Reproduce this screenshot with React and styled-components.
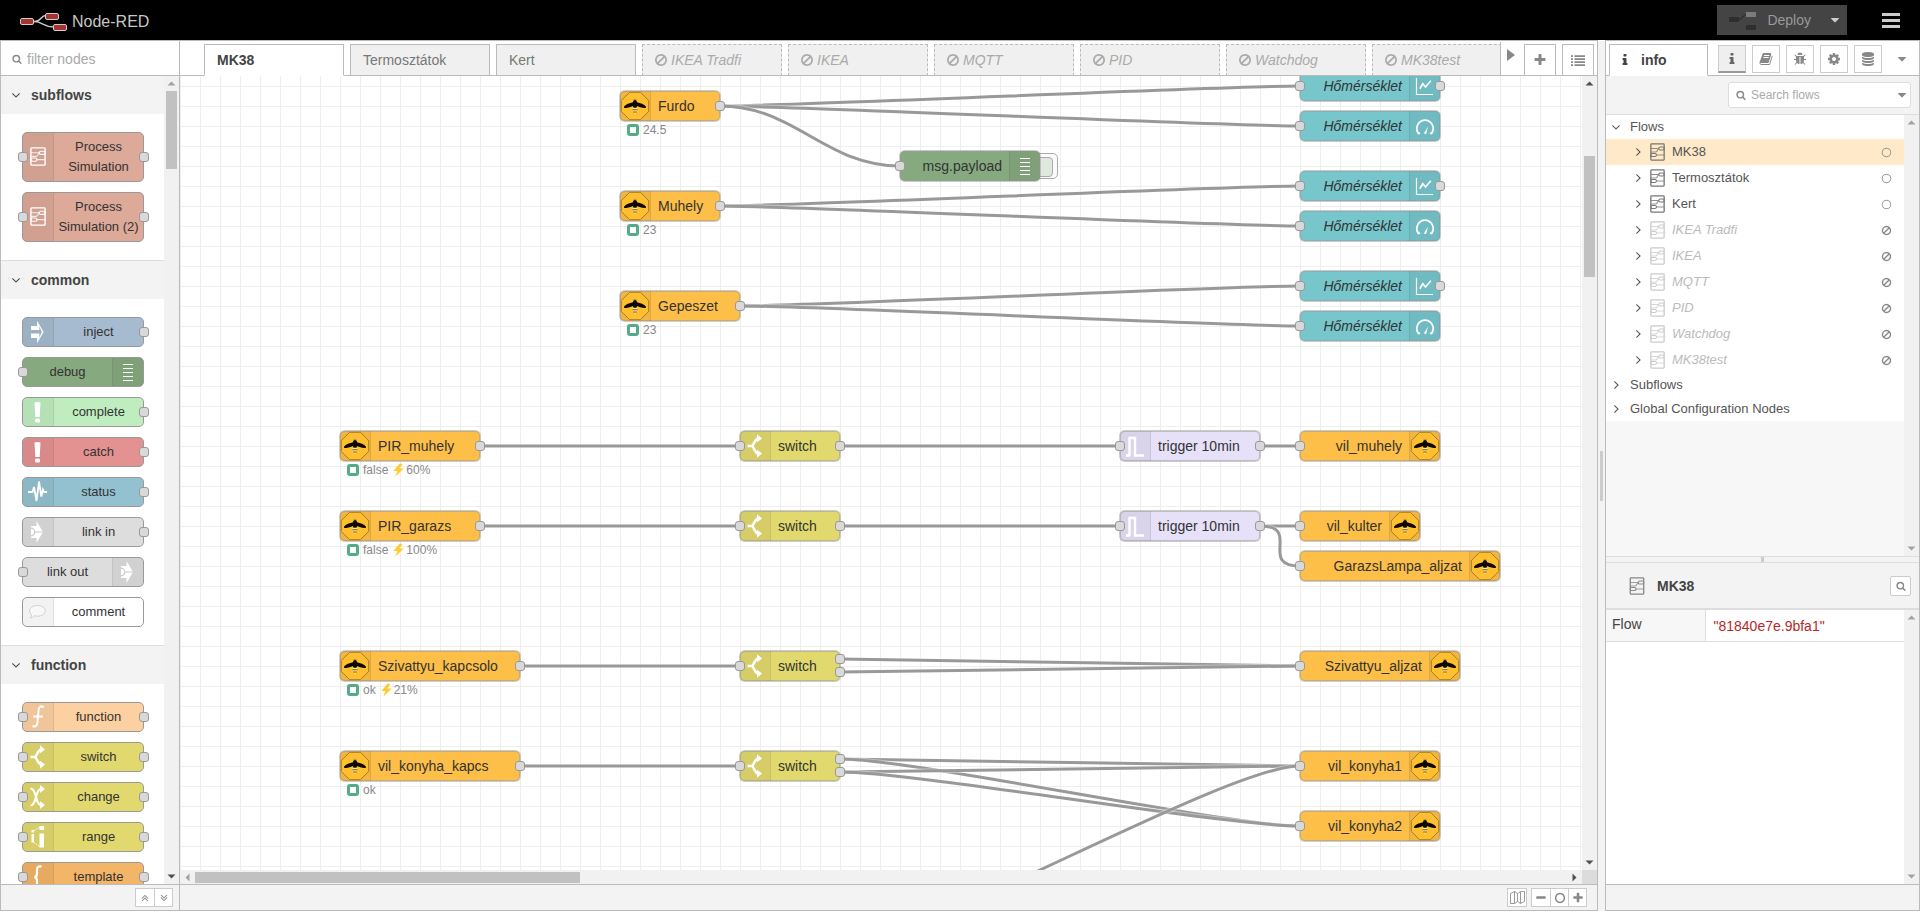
import styled, { createGlobalStyle, css } from 'styled-components';


const GlobalStyle = createGlobalStyle`
    * {
        box-sizing: border-box;
    }
    body {
        margin: 0;
        font-family: "Liberation Sans", Arial, sans-serif;
        font-size: 14px;
        line-height: 20px;
        color: #444;
        background-color: #fff;
    }
    button, input {
        font-family: inherit;
        font-size: inherit;
        color: inherit;
        padding: 0;
        margin: 0;
        border: none;
        background: none;
    }
    a {
        color: inherit;
        text-decoration: none;
    }
    svg {
        display: block;
        flex: none;
    }
`;

const glyphs = {
    search: "M1216 832q0-185-131.5-316.5t-316.5-131.5-316.5 131.5-131.5 316.5 131.5 316.5 316.5 131.5 316.5-131.5 131.5-316.5zm512 832q0 52-38 90t-90 38q-54 0-90-38l-343-342q-179 124-399 124-143 0-273.5-55.5t-225-150-150-225-55.5-273.5 55.5-273.5 150-225 225-150 273.5-55.5 273.5 55.5 225 150 150 225 55.5 273.5q0 220-124 399l343 343q37 37 37 90z",
    plus: "M1600 736v192q0 40-28 68t-68 28h-416v416q0 40-28 68t-68 28h-192q-40 0-68-28t-28-68v-416h-416q-40 0-68-28t-28-68v-192q0-40 28-68t68-28h416v-416q0-40 28-68t68-28h192q40 0 68 28t28 68v416h416q40 0 68 28t28 68z",
    minus: "M1600 736v192q0 40-28 68t-68 28h-1216q-40 0-68-28t-28-68v-192q0-40 28-68t68-28h1216q40 0 68 28t28 68z",
    info: "M1216 1344v128q0 26-19 45t-45 19h-512q-26 0-45-19t-19-45v-128q0-26 19-45t45-19h64v-384h-64q-26 0-45-19t-19-45v-128q0-26 19-45t45-19h384q26 0 45 19t19 45v576h64q26 0 45 19t19 45zm-128-1152v192q0 26-19 45t-45 19h-256q-26 0-45-19t-19-45v-192q0-26 19-45t45-19h256q26 0 45 19t19 45z",
    cog: "M1152 896q0-106-75-181t-181-75-181 75-75 181 75 181 181 75 181-75 75-181zm512-109v222q0 12-8 23t-20 13l-185 28q-19 54-39 91 35 50 107 138 10 12 10 25t-9 23q-27 37-99 108t-94 71q-12 0-26-9l-138-108q-44 23-91 38-16 136-29 186-7 28-36 28h-222q-14 0-24.5-8.5t-11.5-21.5l-28-184q-49-16-90-37l-141 107q-10 9-25 9-14 0-25-11-126-114-165-168-7-10-7-23 0-12 8-23 15-21 51-66.5t54-70.5q-27-50-41-99l-183-27q-13-2-21-12.5t-8-23.5v-222q0-12 8-23t19-13l186-28q14-46 39-92-40-57-107-138-10-12-10-24 0-10 9-23 26-36 98.5-107.5t94.5-71.5q13 0 26 10l138 107q44-23 91-38 16-136 29-186 7-28 36-28h222q14 0 24.5 8.5t11.5 21.5l28 184q49 16 90 37l142-107q9-9 24-9 13 0 25 10 129 119 165 170 7 8 7 22 0 12-8 23-15 21-51 66.5t-54 70.5q26 50 41 98l183 28q13 2 21 12.5t8 23.5z",
    database: "M896 768q237 0 443-43t325-127v170q0 69-103 128t-280 93.5-385 34.5-385-34.5-280-93.5-103-128v-170q119 84 325 127t443 43zm0 768q237 0 443-43t325-127v170q0 69-103 128t-280 93.5-385 34.5-385-34.5-280-93.5-103-128v-170q119 84 325 127t443 43zm0-384q237 0 443-43t325-127v170q0 69-103 128t-280 93.5-385 34.5-385-34.5-280-93.5-103-128v-170q119 84 325 127t443 43zm0-1152q208 0 385 34.5t280 93.5 103 128v128q0 69-103 128t-280 93.5-385 34.5-385-34.5-280-93.5-103-128v-128q0-69 103-128t280-93.5 385-34.5z",
    bug: "M1696 960q0 26-19 45t-45 19h-224q0 171-67 290l208 209q19 19 19 45t-19 45q-18 19-45 19t-45-19l-198-197q-5 5-15 13t-42 28.5-65 36.5-82 29-97 13v-896h-128v896q-51 0-101.5-13.5t-87-33-66-39-43.5-32.5l-15-14-183 207q-20 21-48 21-24 0-43-16-19-18-20.5-44.5t15.5-46.5l202-227q-58-114-58-274h-224q-26 0-45-19t-19-45 19-45 45-19h224v-294l-173-173q-19-19-19-45t19-45 45-19 45 19l173 173h844l173-173q19-19 45-19t45 19 19 45-19 45l-173 173v294h224q26 0 45 19t19 45zm-480-576h-640q0-133 93.5-226.5t226.5-93.5 226.5 93.5 93.5 226.5z",
    book: "M1703 478q40 57 18 129l-275 906q-19 64-76.5 107.5t-122.5 43.5h-923q-77 0-148.5-53.5t-99.5-131.5q-24-67-2-127 0-4 3-27t4-37q1-8-3-21.5t-3-19.5q2-11 8-21t16.5-23.5 16.5-23.5q23-38 45-91.5t30-91.5q3-10 .5-30t-.5-28q3-11 17-28t17-23q21-36 42-92t25-90q1-9-2.5-32t.5-28q4-13 22-30.5t22-22.5q19-26 42.5-84.5t27.5-96.5q1-8-3-25.5t-2-26.5q2-8 9-18t18-23 17-21q8-12 16.5-30.5t15-35 16-36 19.5-32 26.5-23.5 36-11.5 47.5 5.5l-1 3q38-9 51-9h761q74 0 114 56t18 130l-274 906q-36 119-71.5 153.5t-128.5 34.5h-869q-27 0-38 15-11 16-1 43 24 70 144 70h923q29 0 56-15.5t35-41.5l300-987q7-22 5-57 38 15 59 43zm-1064 2q-4 13 2 22.5t20 9.5h608q13 0 25.5-9.5t16.5-22.5l21-64q4-13-2-22.5t-20-9.5h-608q-13 0-25.5 9.5t-16.5 22.5zm-83 256q-4 13 2 22.5t20 9.5h608q13 0 25.5-9.5t16.5-22.5l21-64q4-13-2-22.5t-20-9.5h-608q-13 0-25.5 9.5t-16.5 22.5z",
    ban: "M1440 893q0-161-87-295l-754 753q137 89 297 89 111 0 211.5-43.5t173.5-116.5 116-174.5 43-212.5zm-999 299l755-754q-135-91-300-91-148 0-273 73t-198 199-73 274q0 162 89 299zm1223-299q0 157-61 300t-163.5 246-245 164-298.5 61-298.5-61-245-164-163.5-246-61-300 61-299.5 163.5-245.5 245-164 298.5-61 298.5 61 245 164 163.5 245.5 61 299.5z",
    caret: "M1408 704q0 26-19 45l-448 448q-19 19-45 19t-45-19l-448-448q-19-19-19-45t19-45 45-19h896q26 0 45 19t19 45z",
    angle: "M1395 736q0 13-10 23l-466 466q-10 10-23 10t-23-10l-466-466q-10-10-10-23t10-23l50-50q10-10 23-10t23 10l393 393 393-393q10-10 23-10t23 10l50 50q10 10 10 23z",
    angles: "M1395 864q0 13-10 23l-466 466q-10 10-23 10t-23-10l-466-466q-10-10-10-23t10-23l50-50q10-10 23-10t23 10l393 393 393-393q10-10 23-10t23 10l50 50q10 10 10 23zm0-384q0 13-10 23l-466 466q-10 10-23 10t-23-10l-466-466q-10-10-10-23t10-23l50-50q10-10 23-10t23 10l393 393 393-393q10-10 23-10t23 10l50 50q10 10 10 23z",
    list: "M0 288h256v224H0zM448 288h1344v224H448zM0 672h256v224H0zM448 672h1344v224H448zM0 1056h256v224H0zM448 1056h1344v224H448zM0 1440h256v224H0zM448 1440h1344v224H448z",
    circle: "M896 352q-148 0-273 73t-198 198-73 273 73 273 198 198 273 73 273-73 198-198 73-273-73-273-198-198-273-73zm768 544q0 209-103 385.5t-279.5 279.5-385.5 103-385.5-103-279.5-279.5-103-385.5 103-385.5 279.5-279.5 385.5-103 385.5 103 279.5 279.5 103 385.5z",
    thin: "M896 256q-130 0-248.5 51t-204 136.5-136.5 204-51 248.5 51 248.5 136.5 204 204 136.5 248.5 51 248.5-51 204-136.5 136.5-204 51-248.5-51-248.5-136.5-204-204-136.5-248.5-51zm768 640q0 209-103 385.5t-279.5 279.5-385.5 103-385.5-103-279.5-279.5-103-385.5 103-385.5 279.5-279.5 385.5-103 385.5 103 279.5 279.5 103 385.5z",
};

const Glyph = ({ name, size = 14, turn = 0, color = "currentColor" }) => (
    <svg width={size} height={size} viewBox="0 0 1792 1792" fill={color} aria-hidden="true">
        <path d={glyphs[name]} transform={`rotate(${turn} 896 896)`} />
    </svg>
);

const SubflowIcon = ({ width = 16, height = 19, color = "#fff", stroke = 1.4 }) => (
    <svg width={width} height={height} viewBox="0 0 16 19" fill="none" stroke={color}>
        <rect x="0.9" y="0.9" width="14.2" height="17.2" rx="0.8" strokeWidth={stroke} />
        <g strokeWidth={stroke - 0.3}>
            <path d="M1 5.8h8M1 9.400h5c2.500 0 1.500-3 3.500-3.600M7 12.600H15" strokeOpacity="0.8" />
            <rect x="9.4" y="4.2" width="5.7" height="3.2" rx="1.4" />
            <rect x="0.9" y="11" width="6" height="3.2" rx="1.4" />
        </g>
    </svg>
);

const MapIcon = () => (
    <svg width="15" height="13" viewBox="0 0 15 13" fill="none" stroke="#999" strokeWidth="1">
        <path d="M.5 2.5l4-2 3 2 3-2 4-.2v10.200l-4 2-3-2-3 2-4 0zM4.5.5v12M7.5 2.5v8M10.5.5v12" />
    </svg>
);

const Bolt = () => (
    <svg width="11" height="14" viewBox="0 0 11 14" fill="#fdcb2e">
        <path d="M6.800.5L.3 8h4.200L2.200 13.700 10.700 5.400H6.300L9.600.9z" />
    </svg>
);

const Logo = () => (
    <svg width="48" height="20" viewBox="0 0 48 20" fill="none" stroke="#ccc">
        <path d="M14 9.5c8 0 6-6 12-6M14 9.5c9 0 9 5.5 20 5.5" strokeWidth="1.5" />
        <g fill="#a63334" strokeWidth="1">
            <rect x="0.5" y="6.5" width="13" height="6" rx="1.5" />
            <rect x="25.5" y="1.5" width="13" height="6" rx="1.5" />
            <rect x="33.5" y="12.5" width="13" height="6" rx="1.5" />
        </g>
    </svg>
);

const DeployIcon = () => (
    <svg width="28" height="20" viewBox="0 0 28 20">
        <path d="M10 9.5c4 0 3-5 8-5" stroke="#2e2e2e" strokeWidth="1.2" fill="none" />
        <rect x="0" y="7" width="10" height="5" fill="#2e2e2e" />
        <rect x="17" y="2" width="10" height="5" fill="#7c7c7c" />
        <rect x="17" y="15" width="10" height="5" fill="#2e2e2e" />
    </svg>
);

// Drawings that stand in the shaded end of a node, on a 30 x 30 grid
const nodeArt = {
    bee: (
        <>
            <path d="M9.6 1.3h10.800l8.300 8.300v10.800l-8.300 8.300H9.600L1.300 20.400V9.600z" fill="#ffbf2f" stroke="#a97c26" strokeWidth="1" />
            <path d="M13.900 7.800l.8 1.800h.6l.8-1.800" stroke="#8a661a" strokeWidth="0.6" fill="none" />
            <path d="M15 9c1.200 0 1.900.9 2 2.300 3.300.7 7.300 2.200 8.900 4.100.6.9-.2 1.600-1.600 1.600-2.500 0-5.300-.9-7-1.900L16.300 17h-2.600l-1-1.900c-1.700 1-4.500 1.900-7 1.900-1.400 0-2.200-.7-1.600-1.600 1.600-1.900 5.600-3.400 8.900-4.100.1-1.400.8-2.300 2-2.300z" fill="#0c0903" />
            <path d="M12.600 16.800h4.800v1.400h-4.800zM12.700 19.300h4.600v1.200h-4.600zM13.900 21.600h2.200L15 23.200z" fill="#fff0b8" />
            <path d="M12.500 18.200h5v1.100h-5zM13.200 20.500h3.600v1.100h-3.600z" fill="#8a5d10" />
        </>
    ),
    inject: <path d="M8 9h6V3.800L20.600 15 14 26.200V21H8v-4.500h8.300v4L18.900 15l-2.600-5.500v3.500H8z" fill="#fff" />,
    debug: <path d="M10 7.500h10M10 11.500h10M10 15.500h10M10 19.500h10M10 23.500h10" stroke="#fff" strokeWidth="1.2" />,
    bang: (
        <>
            <path d="M11.500 5.500q3-1.200 6 0L16.700 20h-4.400z" fill="#fff" />
            <rect x="12" y="21.5" width="5" height="4" rx="1.5" fill="#fff" />
        </>
    ),
    status: <path d="M5 15h4.500l1.500-5 2.500 14L16 4.500l2.300 15 1.600-7L21 15h3" fill="none" stroke="#fff" strokeWidth="1.8" />,
    link: (
        <>
            <path d="M8 9h5.500V4L20 15l-6.500 11v-5H8z" fill="#fff" />
            <path d="M8 11.200a3.800 3.800 0 0 1 0 7.600M11.800 15H20" fill="none" stroke="#c9c9c9" strokeWidth="1.2" />
        </>
    ),
    comment: <path d="M14.500 8.500c4.500 0 7.800 2.300 7.800 5.300s-3.300 5.400-7.800 5.400c-1.100 0-2.200-.2-3.200-.4-1.100 1.300-2.600 2-4.300 2.200 1-.9 1.500-2 1.500-3.300-1.200-1-1.900-2.400-1.900-3.900 0-3 3.400-5.300 7.900-5.300z" fill="#f8f8f8" stroke="#ccc" strokeWidth="0.9" />,
    func: <path d="M20.800 5.500c-3-2.500-5-.5-5.300 3l-1 11.500c-.3 4-2 5.500-5 4M10 14.500h10" fill="none" stroke="#fff" strokeWidth="2" />,
    fork: (
        <>
            <path d="M7.500 15h4.500c2-1 2.500-7 6.500-7.800M12 15c2 1 2.500 7 6.500 7.800" fill="none" stroke="#fff" strokeWidth="2.4" />
            <path d="M17 3.200l5 4.300-5 3.800zM17 18.700l5 3.800-5 4.300z" fill="#fff" />
        </>
    ),
    change: (
        <>
            <path d="M7.500 6.500c3 0 4.200 3 5.500 8.500s2.500 8 5 8M7.500 23.500c3 0 4.200-3 5.500-8.500s2.500-8 5-8" fill="none" stroke="#fff" strokeWidth="2.2" />
            <path d="M17 3l5 4-5 4zM17 19l5 4-5 4z" fill="#fff" />
        </>
    ),
    range: (
        <>
            <path d="M8.500 8h2.500v2.500H8.500zM8.500 12h2.500v8.500H8.500zM16.500 4h4.500v4h-4.500zM16.500 11.500h4.500v14h-4.500z" fill="#fff" />
            <path d="M11 8.500l5.500-3M11 20.500l5.500 4" stroke="#fff" strokeWidth="1" strokeDasharray="1.5 1" />
        </>
    ),
    template: <path d="M18.500 4.500c-4-.5-4.500 1-4.500 4v3c0 2.500-.5 3.500-2.800 3.700 2.300.2 2.800 1.300 2.800 3.800v3c0 3 .5 4.500 4.500 4" fill="none" stroke="#fff" strokeWidth="2.2" />,
    trigger: <path d="M6 24.500h3.500V7h5.500v17.500h9" fill="none" stroke="#fff" strokeWidth="2.4" />,
    chart: (
        <>
            <path d="M6.500 7v16.500h16.500" fill="none" stroke="#fff" strokeWidth="1.2" />
            <path d="M9.800 17.800l3-5 2.700 3.200 5.300-6.300" fill="none" stroke="#fff" strokeWidth="1.7" />
        </>
    ),
    gauge: (
        <>
            <path d="M10 22.200l-1.600.3a8.300 8.300 0 1 1 13.200 0l-1.600-.3" fill="none" stroke="#fff" strokeWidth="1.8" />
            <path d="M13.800 22.500L18 15.500l-1.800 7.500z" fill="#fff" />
        </>
    ),
};


/* ---------- Shell ---------- */

const Page = styled.div`
    height: 100vh;
    padding-bottom: 3px;
    display: flex;
    flex-direction: column;
    overflow: hidden;
`;

const Header = styled.header`
    height: 40px;
    padding: 0 20px;
    background-color: #000;
    display: flex;
    align-items: center;
    justify-content: space-between;
`;

const Brand = styled.div`
    display: flex;
    align-items: center;
    gap: 4px;
    padding-top: 3px;
    font-size: 16px;
    color: #c7c7c7;
`;

const HeaderTools = styled.div`
    display: flex;
    align-items: center;
    gap: 35px;
`;

const Deploy = styled.div`
    height: 30px;
    display: flex;
    background-color: #444;
    color: #999;
`;

const DeployButton = styled.button`
    padding: 0 12px;
    display: flex;
    align-items: center;
    gap: 10px;
`;

const DeployMenu = styled.button`
    width: 24px;
    display: flex;
    align-items: center;
    justify-content: center;
    color: #ccc;
`;

const MenuButton = styled.button`
    width: 18px;
    height: 15px;
    border: solid #ccc;
    border-width: 3px 0;
    display: flex;
    align-items: center;

    &::before {
        content: '';
        flex: 1;
        height: 3px;
        background-color: #ccc;
    }
`;

const Main = styled.main`
    flex: 1;
    min-height: 0;
    display: flex;
`;

const panel = css`
    display: flex;
    flex-direction: column;
    border: 1px solid #bbb;
    min-width: 0;
`;

const PanelFooter = styled.footer`
    height: 26px;
    padding: 0 ${(props) => props.$end || 0}px;
    border-top: 1px solid #bbb;
    background-color: #f3f3f3;
    display: flex;
    align-items: center;
    justify-content: flex-end;
    gap: 4px;
`;

const ButtonGroup = styled.div`
    display: flex;
    border: 1px solid #ccc;
    background-color: #fff;
    color: #888;
`;

const FootButton = styled.button`
    width: 18px;
    height: 17px;
    display: flex;
    align-items: center;
    justify-content: center;

    & + & {
        border-left: 1px solid #ccc;
    }
`;


/* ---------- Scroll bars ---------- */

const Bar = styled.div`
    flex: none;
    display: flex;
    flex-direction: ${(props) => (props.$across ? 'row' : 'column')};
    ${(props) => (props.$across ? 'height: 14px;' : 'width: 15px;')}
    background-color: #f1f1f1;
`;

const BarEnd = styled.div`
    width: 15px;
    height: 15px;
    display: flex;
    align-items: center;
    justify-content: center;
`;

const Track = styled.div`
    flex: 1;
    padding: ${(props) => (props.$across ? '2px 0' : '0 2px')};
`;

const Thumb = styled.div`
    background-color: #c1c1c1;
    ${(props) => (props.$across
        ? `height: 11px; width: ${props.$size}px; margin-left: ${props.$start}px;`
        : `width: 11px; height: ${props.$size}px; margin-top: ${props.$start}px;`)}
`;

const Arrow = ({ turn, dim }) => (
    <svg width="15" height="15" viewBox="0 0 15 15" fill={dim ? "#a3a3a3" : "#505050"}>
        <path d="M7.5 5.5l4 4h-8z" transform={`rotate(${turn} 7.5 7.5)`} />
    </svg>
);

const ScrollBar = ({ across, start = 0, size = 0, dimFirst, dimLast }) => (
    <Bar $across={across}>
        <BarEnd><Arrow turn={across ? -90 : 0} dim={dimFirst} /></BarEnd>
        <Track $across={across}>{size > 0 && <Thumb $across={across} $start={start} $size={size} />}</Track>
        <BarEnd><Arrow turn={across ? 90 : 180} dim={dimLast} /></BarEnd>
    </Bar>
);


/* ---------- Nodes, in the palette and on the canvas ---------- */

const Port = styled.span`
    position: absolute;
    width: 10px;
    height: 10px;
    border-radius: 3px;
    background-color: #d9d9d9;
    border: 1px solid #999;
    top: calc(50% - 5px + ${(props) => props.$shift || 0}px);
    ${(props) => (props.$side === 'in' ? 'left: -5px;' : 'right: -5px;')}
`;

const IconCell = styled.span`
    flex: none;
    width: 31px;
    display: flex;
    align-items: center;
    background-color: rgba(0, 0, 0, 0.05);
    border: solid rgba(0, 0, 0, 0.07);
    border-width: ${(props) => (props.$end ? '0 0 0 1px' : '0 1px 0 0')};
    border-radius: ${(props) => (props.$end ? '0 4px 4px 0' : '4px 0 0 4px')};
    overflow: hidden;
`;

const PaletteNode = styled.div`
    position: relative;
    display: flex;
    flex-direction: ${(props) => (props.$flip ? 'row-reverse' : 'row')};
    width: 122px;
    height: ${(props) => (props.$tall ? 50 : 30)}px;
    border: 1px solid #999;
    border-radius: 5px;
    background-color: ${(props) => props.$color};
`;

const PalettePort = styled(Port)`
    ${(props) => props.$side === 'out' && 'right: -6px;'}
`;

const PaletteLabel = styled.span`
    flex: 1;
    align-self: center;
    text-align: center;
    white-space: pre-line;
    font-size: 13px;
    color: #333;
`;

const CanvasNode = styled.div`
    position: absolute;
    left: ${(props) => props.$x}px;
    top: ${(props) => props.$y - 15}px;
    width: ${(props) => props.$w}px;
    height: 30px;
    display: flex;
    flex-direction: ${(props) => (props.$flip ? 'row-reverse' : 'row')};
    border-radius: 5px;
    background-color: ${(props) => props.$color};
    box-shadow: 0 0 0 1px rgba(153, 153, 153, 0.5), inset 0 0 0 1px rgba(153, 153, 153, 0.5);
`;

const CanvasLabel = styled.span`
    padding: 0 7px;
    line-height: 30px;
    white-space: nowrap;
    color: #333;
    font-style: ${(props) => (props.$italic ? 'italic' : 'normal')};
`;

const Status = styled.span`
    position: absolute;
    top: 33px;
    left: 7px;
    display: flex;
    align-items: center;
    height: 12px;
    font-size: 12px;
    line-height: 12px;
    white-space: nowrap;
    color: #888;
`;

const Dot = styled.i`
    width: 12px;
    height: 12px;
    margin-right: 4px;
    border: 3px solid #5a8;
    border-radius: 3px;
    background-color: #fff;
`;

const Charge = styled.span`
    display: flex;
    align-items: center;
    gap: 2px;
    margin-left: 5px;
`;

const DebugToggle = styled.button`
    position: absolute;
    z-index: -1;
    right: -18px;
    top: 2px;
    width: 24px;
    height: 26px;
    padding: 3px 4px 3px 0;
    border: 1px solid #aaa;
    border-radius: 5px;
    background-color: #fbfbfb;

    &::before {
        content: '';
        display: block;
        height: 18px;
        border: 1px solid #aaa;
        border-radius: 4px;
        background-color: #e1e9df;
    }
`;

const NodeArt = ({ icon }) => (
    icon === 'subflow'
        ? <svg width="30" height="30" viewBox="0 0 30 30"><g transform="translate(7 5)"><SubflowIcon /></g></svg>
        : <svg width="30" height="30" viewBox="0 0 30 30">{nodeArt[icon]}</svg>
);


/* ---------- Palette ---------- */

const PalettePanel = styled.aside`
    ${panel}
    flex: none;
    width: 180px;
`;

const Filter = styled.label`
    height: 35px;
    padding: 2px 11px 0;
    display: flex;
    align-items: center;
    gap: 5px;
    border-bottom: 1px solid #bbb;
    color: #888;
`;

const FilterInput = styled.input`
    width: 100%;
    min-width: 0;
    outline: none;
    font-size: ${(props) => (props.$small ? 12 : 14)}px;

    &::placeholder {
        color: #aaa;
    }
`;

const ScrollArea = styled.div`
    flex: 1;
    min-height: 0;
    display: flex;
`;

const Categories = styled.div`
    flex: 1;
    overflow: hidden;
`;

const Category = styled.section`
    border-bottom: 1px solid #ddd;
`;

const CategoryTitle = styled.button`
    width: 100%;
    height: 38px;
    padding: 0 8px;
    display: flex;
    align-items: center;
    gap: 8px;
    background-color: #f3f3f3;
    font-weight: bold;
`;

const CategoryNodes = styled.div`
    padding: 18px 21px;
    display: flex;
    flex-direction: column;
    gap: 10px;
`;

const categories = [
    {
        title: 'subflows',
        nodes: [
            { label: 'Process\nSimulation', color: '#dda998', icon: 'subflow', inp: true, out: true, tall: true },
            { label: 'Process\nSimulation (2)', color: '#dda998', icon: 'subflow', inp: true, out: true, tall: true },
        ],
    },
    {
        title: 'common',
        nodes: [
            { label: 'inject', color: '#a6bbcf', icon: 'inject', out: true },
            { label: 'debug', color: '#87a980', icon: 'debug', inp: true, flip: true },
            { label: 'complete', color: '#c0edc0', icon: 'bang', out: true },
            { label: 'catch', color: '#e49191', icon: 'bang', out: true },
            { label: 'status', color: '#94c1d0', icon: 'status', out: true },
            { label: 'link in', color: '#ddd', icon: 'link', out: true },
            { label: 'link out', color: '#ddd', icon: 'link', inp: true, flip: true },
            { label: 'comment', color: '#fff', icon: 'comment' },
        ],
    },
    {
        title: 'function',
        nodes: [
            { label: 'function', color: '#fdd0a2', icon: 'func', inp: true, out: true },
            { label: 'switch', color: '#e2d96e', icon: 'fork', inp: true, out: true },
            { label: 'change', color: '#e2d96e', icon: 'change', inp: true, out: true },
            { label: 'range', color: '#e2d96e', icon: 'range', inp: true, out: true },
            { label: 'template', color: '#f3b567', icon: 'template', inp: true, out: true },
        ],
    },
];

const Palette = () => (
    <PalettePanel>
        <Filter>
            <Glyph name="search" size={10} />
            <FilterInput type="text" placeholder="filter nodes" aria-label="filter nodes" />
        </Filter>
        <ScrollArea>
            <Categories>
                {categories.map((category) => (
                    <Category key={category.title}>
                        <CategoryTitle type="button">
                            <Glyph name="angle" />
                            {category.title}
                        </CategoryTitle>
                        <CategoryNodes>
                            {category.nodes.map((node) => (
                                <PaletteNode key={node.label} $color={node.color} $tall={node.tall} $flip={node.flip}>
                                    <IconCell $end={node.flip}><NodeArt icon={node.icon} /></IconCell>
                                    <PaletteLabel>{node.label}</PaletteLabel>
                                    {node.inp && <PalettePort $side="in" />}
                                    {node.out && <PalettePort $side="out" />}
                                </PaletteNode>
                            ))}
                        </CategoryNodes>
                    </Category>
                ))}
            </Categories>
            <ScrollBar size={78} dimFirst />
        </ScrollArea>
        <PanelFooter $end={6}>
            <ButtonGroup>
                <FootButton type="button" aria-label="collapse all"><Glyph name="angles" size={12} turn={180} /></FootButton>
                <FootButton type="button" aria-label="expand all"><Glyph name="angles" size={12} /></FootButton>
            </ButtonGroup>
        </PanelFooter>
    </PalettePanel>
);


/* ---------- Workspace ---------- */

const WorkspacePanel = styled.section`
    ${panel}
    flex: 1;
    border-left: none;
`;

const TabBar = styled.div`
    height: 35px;
    display: flex;
    align-items: flex-end;
    box-shadow: inset 0 -1px 0 #bbb;
`;

const Tabs = styled.nav`
    flex: 1;
    min-width: 0;
    padding-left: 24px;
    display: flex;
    gap: 6px;
    overflow: hidden;
`;

const Tab = styled.a`
    flex: none;
    width: 140px;
    height: 32px;
    padding: 0 12px;
    display: flex;
    align-items: center;
    gap: 2px;
    border: 1px solid #bbb;
    background-color: #f0f0f0;
    color: #777;
    ${(props) => props.$active && css`
        border-bottom-color: #fff;
        background-color: #fff;
        color: #444;
        font-weight: bold;
    `}
    ${(props) => props.$disabled && css`
        padding-left: 11px;
        gap: 3px;
        border-style: dashed dashed solid;
        color: #aaa;
        font-style: italic;
    `}
`;

const TabScroll = styled.button`
    width: 24px;
    height: 34px;
    padding: 0 6px 8px;
    display: flex;
    align-items: center;
    border-left: 1px solid #bbb;
`;

const TabTools = styled.div`
    display: flex;
    gap: 6px;
    padding-right: 3px;
`;

const TabTool = styled.button`
    width: 32px;
    height: 32px;
    display: flex;
    align-items: center;
    justify-content: center;
    border: 1px solid #bbb;
    color: #888;
`;

const CanvasColumn = styled.div`
    flex: 1;
    min-width: 0;
    display: flex;
    flex-direction: column;
`;

const Canvas = styled.div`
    position: relative;
    z-index: 0;
    flex: 1;
    overflow: hidden;
    background-image:
        linear-gradient(to right, #eee 1px, transparent 1px),
        linear-gradient(to bottom, #eee 1px, transparent 1px);
    background-size: 20px 20px;
    background-position: 0 10px;
`;

const Wires = styled.svg`
    position: absolute;
    z-index: -2;
    inset: 0;
    width: 100%;
    height: 100%;
    fill: none;
`;

const ScrollSide = styled.div`
    display: flex;
    flex-direction: column;
    background-color: #dcdcdc;
    padding-bottom: 14px;

    & > * {
        flex: 1;
    }
`;

const flows = [
    { name: 'MK38', active: true },
    { name: 'Termosztátok' },
    { name: 'Kert' },
    { name: 'IKEA Tradfi', disabled: true },
    { name: 'IKEA', disabled: true },
    { name: 'MQTT', disabled: true },
    { name: 'PID', disabled: true },
    { name: 'Watchdog', disabled: true },
    { name: 'MK38test', disabled: true },
];

const kinds = {
    sensor: { color: '#fdbf47', icon: 'bee', outs: 1 },
    device: { color: '#fdbf47', icon: 'bee', inp: true, flip: true, outs: 0 },
    branch: { color: '#e2d96e', icon: 'fork', inp: true, outs: 1 },
    timer: { color: '#e6e0f8', icon: 'trigger', inp: true, outs: 1 },
    chart: { color: '#77c6cc', icon: 'chart', inp: true, flip: true, italic: true, outs: 1 },
    gauge: { color: '#77c6cc', icon: 'gauge', inp: true, flip: true, italic: true, outs: 0 },
    debug: { color: '#87a980', icon: 'debug', inp: true, flip: true, toggle: true, outs: 0 },
};

// y is the middle of the node
const nodes = [
    { kind: 'sensor', label: 'Furdo', x: 440, y: 30, w: 100, status: '24.5' },
    { kind: 'debug', label: 'msg.payload', x: 720, y: 90, w: 140 },
    { kind: 'chart', label: 'Hőmérséklet', x: 1120, y: 10, w: 140 },
    { kind: 'gauge', label: 'Hőmérséklet', x: 1120, y: 50, w: 140 },
    { kind: 'sensor', label: 'Muhely', x: 440, y: 130, w: 100, status: '23' },
    { kind: 'chart', label: 'Hőmérséklet', x: 1120, y: 110, w: 140 },
    { kind: 'gauge', label: 'Hőmérséklet', x: 1120, y: 150, w: 140 },
    { kind: 'sensor', label: 'Gepeszet', x: 440, y: 230, w: 120, status: '23' },
    { kind: 'chart', label: 'Hőmérséklet', x: 1120, y: 210, w: 140 },
    { kind: 'gauge', label: 'Hőmérséklet', x: 1120, y: 250, w: 140 },
    { kind: 'sensor', label: 'PIR_muhely', x: 160, y: 370, w: 140, status: 'false', charge: '60%' },
    { kind: 'branch', label: 'switch', x: 560, y: 370, w: 100 },
    { kind: 'timer', label: 'trigger 10min', x: 940, y: 370, w: 140 },
    { kind: 'device', label: 'vil_muhely', x: 1120, y: 370, w: 140 },
    { kind: 'sensor', label: 'PIR_garazs', x: 160, y: 450, w: 140, status: 'false', charge: '100%' },
    { kind: 'branch', label: 'switch', x: 560, y: 450, w: 100 },
    { kind: 'timer', label: 'trigger 10min', x: 940, y: 450, w: 140 },
    { kind: 'device', label: 'vil_kulter', x: 1120, y: 450, w: 120 },
    { kind: 'device', label: 'GarazsLampa_aljzat', x: 1120, y: 490, w: 200 },
    { kind: 'sensor', label: 'Szivattyu_kapcsolo', x: 160, y: 590, w: 180, status: 'ok', charge: '21%' },
    { kind: 'branch', label: 'switch', x: 560, y: 590, w: 100, outs: 2 },
    { kind: 'device', label: 'Szivattyu_aljzat', x: 1120, y: 590, w: 160 },
    { kind: 'sensor', label: 'vil_konyha_kapcs', x: 160, y: 690, w: 180, status: 'ok' },
    { kind: 'branch', label: 'switch', x: 560, y: 690, w: 100, outs: 2 },
    { kind: 'device', label: 'vil_konyha1', x: 1120, y: 690, w: 140 },
    { kind: 'device', label: 'vil_konyha2', x: 1120, y: 750, w: 140 },
];

const wires = [
    [540, 30, 1120, 10],
    [540, 30, 1120, 50],
    [540, 30, 720, 90],
    [540, 130, 1120, 110],
    [540, 130, 1120, 150],
    [560, 230, 1120, 210],
    [560, 230, 1120, 250],
    [300, 370, 560, 370],
    [660, 370, 940, 370],
    [1080, 370, 1120, 370],
    [300, 450, 560, 450],
    [660, 450, 940, 450],
    [1080, 450, 1120, 450],
    [1080, 450, 1120, 490],
    [340, 590, 560, 590],
    [660, 583, 1120, 590],
    [660, 596, 1120, 590],
    [340, 690, 560, 690],
    [660, 683, 1120, 690],
    [660, 683, 1120, 750],
    [660, 696, 1120, 690],
    [660, 696, 1120, 750],
    [660, 870, 1120, 690],
];

const curve = ([x1, y1, x2, y2]) => {
    const reach = 0.75 * Math.min(100, Math.hypot(x2 - x1, y2 - y1));
    return `M${x1} ${y1}C${x1 + reach} ${y1} ${x2 - reach} ${y2} ${x2} ${y2}`;
};

const portShifts = { 0: [], 1: [0], 2: [-7, 6] };

const FlowNode = ({ node }) => {
    const kind = kinds[node.kind];
    return (
        <CanvasNode $x={node.x} $y={node.y} $w={node.w} $color={kind.color} $flip={kind.flip}>
            <IconCell $end={kind.flip}><NodeArt icon={kind.icon} /></IconCell>
            <CanvasLabel $italic={kind.italic}>{node.label}</CanvasLabel>
            {kind.toggle && <DebugToggle type="button" aria-label="toggle debug" />}
            {kind.inp && <Port $side="in" />}
            {portShifts[node.outs ?? kind.outs].map((shift) => (
                <Port key={shift} $side="out" $shift={shift} />
            ))}
            {node.status && (
                <Status>
                    <Dot />
                    {node.status}
                    {node.charge && <Charge><Bolt />{node.charge}</Charge>}
                </Status>
            )}
        </CanvasNode>
    );
};

const Workspace = () => (
    <WorkspacePanel>
        <TabBar>
            <Tabs>
                {flows.map((flow) => (
                    <Tab key={flow.name} href="#" $active={flow.active} $disabled={flow.disabled}>
                        {flow.disabled && <Glyph name="ban" />}
                        {flow.name}
                    </Tab>
                ))}
            </Tabs>
            <TabScroll type="button" aria-label="scroll tabs">
                <svg width="8" height="12" viewBox="0 0 8 12" fill="#888"><path d="M0 0l8 6-8 6z" /></svg>
            </TabScroll>
            <TabTools>
                <TabTool type="button" aria-label="add flow"><Glyph name="plus" /></TabTool>
                <TabTool type="button" aria-label="list flows"><Glyph name="list" /></TabTool>
            </TabTools>
        </TabBar>
        <ScrollArea>
            <CanvasColumn>
                <Canvas>
                    <Wires>
                        {wires.map((wire) => (
                            <g key={wire.join()}>
                                <path d={curve(wire)} stroke="#fff" strokeOpacity="0.4" strokeWidth="5" />
                                <path d={curve(wire)} stroke="#999" strokeWidth="3" />
                            </g>
                        ))}
                    </Wires>
                    {nodes.map((node) => <FlowNode key={`${node.x}-${node.y}`} node={node} />)}
                </Canvas>
                <ScrollBar across size={385} dimFirst />
            </CanvasColumn>
            <ScrollSide>
                <ScrollBar start={65} size={121} />
            </ScrollSide>
        </ScrollArea>
        <PanelFooter $end={10}>
            <ButtonGroup>
                <FootButton type="button" aria-label="toggle navigator"><MapIcon /></FootButton>
            </ButtonGroup>
            <ButtonGroup>
                <FootButton type="button" aria-label="zoom out"><Glyph name="minus" size={12} /></FootButton>
                <FootButton type="button" aria-label="reset zoom"><Glyph name="circle" size={12} /></FootButton>
                <FootButton type="button" aria-label="zoom in"><Glyph name="plus" size={12} /></FootButton>
            </ButtonGroup>
        </PanelFooter>
    </WorkspacePanel>
);


/* ---------- Sidebar ---------- */

const Separator = styled.div`
    width: 7px;
    margin-top: 1px;
    display: flex;
    align-items: center;
    justify-content: center;
    background-color: #f3f3f3;

    &::before {
        content: '';
        width: 3px;
        height: 50px;
        background-color: #ccc;
    }
`;

const SidebarPanel = styled.aside`
    ${panel}
    flex: none;
    width: 315px;
`;

const SideTabs = styled.div`
    height: 35px;
    padding-left: 3px;
    display: flex;
    align-items: flex-end;
    box-shadow: inset 0 -1px 0 #bbb;
`;

const SideTab = styled.a`
    flex: none;
    width: 99px;
    height: 32px;
    padding: 0 8px;
    display: flex;
    align-items: center;
    gap: 9px;
    border: 1px solid #bbb;
    border-bottom-color: #fff;
    background-color: #fff;
    font-weight: bold;
`;

const SideTools = styled.div`
    flex: 1;
    padding: 0 3px 3px 10px;
    display: flex;
    gap: 6px;
    color: #888;
`;

const SideTool = styled.button`
    width: 28px;
    height: 28px;
    display: flex;
    align-items: center;
    justify-content: center;
    border: 1px solid #ccc;
    ${(props) => props.$active && css`
        padding-top: 1px;
        border-bottom: 2px solid #999;
        background-color: #efefef;
        color: #666;
    `}
    ${(props) => props.$plain && 'border: none;'}
`;

const SearchBar = styled.div`
    height: 39px;
    padding: 0 8px;
    display: flex;
    align-items: center;
    justify-content: flex-end;
    border-bottom: 1px solid #ddd;
    background-color: #f3f3f3;
`;

const SearchBox = styled.label`
    width: 183px;
    height: 26px;
    padding: 0 1px 0 7px;
    display: flex;
    align-items: center;
    gap: 5px;
    border: 1px solid #ddd;
    border-radius: 3px;
    background-color: #fff;
    color: #888;
`;

const Outline = styled.div`
    flex: 1;
    background-color: #f7f7f7;
`;

const Branch = styled.div`
    height: 24px;
    padding: 0 3px;
    display: flex;
    align-items: center;
    gap: 7px;
    background-color: #fff;
    font-size: 13px;
    color: #555;
`;

const FlowRow = styled.a`
    height: 26px;
    padding: 0 12px 0 25px;
    display: flex;
    align-items: center;
    gap: 5px;
    font-size: 13px;
    color: #555;
    background-color: ${(props) => (props.$active ? '#ffe9c8' : '#fff')};
`;

const FlowName = styled.span`
    flex: 1;
    padding-left: 2px;
    ${(props) => props.$disabled && css`
        color: #bbb;
        font-style: italic;
    `}
`;

const Splitter = styled.div`
    height: 7px;
    border: solid #ddd;
    border-width: 1px 0;
    background-color: #f3f3f3;
    display: flex;
    justify-content: center;

    &::before {
        content: '';
        width: 3px;
        background-color: #ccc;
    }
`;

const DetailTitle = styled.div`
    height: 47px;
    padding: 0 8px 0 23px;
    display: flex;
    align-items: center;
    gap: 12px;
    border-bottom: 2px solid #ddd;
    background-color: #f3f3f3;
    font-weight: bold;
`;

const FindButton = styled.button`
    width: 21px;
    height: 20px;
    margin-left: auto;
    display: flex;
    align-items: center;
    justify-content: center;
    border: 1px solid #ccc;
    border-radius: 2px;
    background-color: #fff;
    color: #888;
`;

const Detail = styled.div`
    flex: none;
    height: 274px;
    display: flex;
`;

const DetailBody = styled.div`
    flex: 1;
`;

const Properties = styled.table`
    width: 100%;
    border-collapse: collapse;

    th, td {
        height: 31px;
        padding: 0 6px;
        border-bottom: 1px solid #ddd;
        text-align: left;
        font-weight: normal;
    }
    th {
        width: 99px;
        padding-bottom: 3px;
        border-right: 1px solid #ddd;
        background-color: #f7f7f7;
    }
    td {
        padding: 2px 8px 0;
        color: #b72828;
    }
`;

const Sidebar = () => (
    <SidebarPanel>
        <SideTabs>
            <SideTab href="#"><Glyph name="info" />info</SideTab>
            <SideTools>
                <SideTool type="button" $active aria-label="info"><Glyph name="info" /></SideTool>
                <SideTool type="button" aria-label="help"><Glyph name="book" /></SideTool>
                <SideTool type="button" aria-label="debug messages"><Glyph name="bug" /></SideTool>
                <SideTool type="button" aria-label="configuration nodes"><Glyph name="cog" /></SideTool>
                <SideTool type="button" aria-label="context data"><Glyph name="database" /></SideTool>
                <SideTool type="button" $plain aria-label="more tabs"><Glyph name="caret" /></SideTool>
            </SideTools>
        </SideTabs>
        <SearchBar>
            <SearchBox>
                <Glyph name="search" size={10} />
                <FilterInput $small type="text" placeholder="Search flows" aria-label="Search flows" />
                <Glyph name="caret" size={14} />
            </SearchBox>
        </SearchBar>
        <ScrollArea>
            <Outline>
                <Branch><Glyph name="angle" size={14} />Flows</Branch>
                {flows.map((flow) => (
                    <FlowRow key={flow.name} href="#" $active={flow.active}>
                        <Glyph name="angle" size={14} turn={-90} />
                        <SubflowIcon width={15} height={18} color={flow.disabled ? '#ccc' : '#777'} />
                        <FlowName $disabled={flow.disabled}>{flow.name}</FlowName>
                        <Glyph name={flow.disabled ? 'ban' : 'thin'} size={11} color="#888" />
                    </FlowRow>
                ))}
                <Branch><Glyph name="angle" size={14} turn={-90} />Subflows</Branch>
                <Branch><Glyph name="angle" size={14} turn={-90} />Global Configuration Nodes</Branch>
            </Outline>
            <ScrollBar dimFirst dimLast />
        </ScrollArea>
        <Splitter />
        <DetailTitle>
            <SubflowIcon width={16} height={18} color="#888" />
            MK38
            <FindButton type="button" aria-label="find flow"><Glyph name="search" size={10} /></FindButton>
        </DetailTitle>
        <Detail>
            <DetailBody>
                <Properties>
                    <tbody>
                        <tr>
                            <th scope="row">Flow</th>
                            <td>"81840e7e.9bfa1"</td>
                        </tr>
                    </tbody>
                </Properties>
            </DetailBody>
            <ScrollBar dimFirst dimLast />
        </Detail>
        <PanelFooter />
    </SidebarPanel>
);


const App = () => {
    return (
        <>
            <GlobalStyle />
            <Page>
                <Header>
                    <Brand>
                        <Logo />
                        <span>Node-RED</span>
                    </Brand>
                    <HeaderTools>
                        <Deploy>
                            <DeployButton type="button"><DeployIcon />Deploy</DeployButton>
                            <DeployMenu type="button" aria-label="deploy options"><Glyph name="caret" /></DeployMenu>
                        </Deploy>
                        <MenuButton type="button" aria-label="main menu" />
                    </HeaderTools>
                </Header>
                <Main>
                    <Palette />
                    <Workspace />
                    <Separator />
                    <Sidebar />
                </Main>
            </Page>
        </>
    );
};


export default App;
